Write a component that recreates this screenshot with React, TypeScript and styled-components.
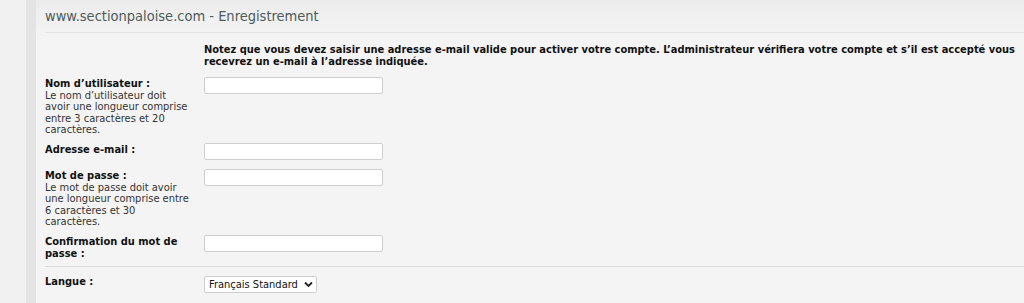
import React from "react";
import styled, { createGlobalStyle } from "styled-components";

const FONT = `"DejaVu Sans Condensed", "DejaVu Sans", Verdana, sans-serif`;

const GlobalStyle = createGlobalStyle`
  html, body { margin: 0; padding: 0; }
  body {
    background: #f1f1f1;
    font-family: ${FONT};
    color: #222;
  }
`;

const Page = styled.div`
  display: flex;
  min-height: 303px;
`;

const Gutter = styled.div`
  width: 26px;
  flex: none;
  background: #f1f1f1;
`;

const Rail = styled.div`
  width: 10px;
  flex: none;
  background: #e4e4e4;
`;

const Panel = styled.main`
  flex: 1;
  background: #f4f4f4;
  min-width: 0;
  overflow: hidden;
`;

const Header = styled.header`
  background: linear-gradient(#ececec, #f3f3f3);
  padding-left: 9px;
`;

const HeaderInner = styled.div`
  height: 32px;
  display: flex;
  align-items: center;
  border-bottom: 1px solid #e3e3e3;
`;

const Title = styled.h1`
  margin: 0;
  font-family: ${FONT};
  font-weight: normal;
  font-size: 14.5px;
  color: #4d5c5a;
`;

const Body = styled.form`
  padding: 0 0 0 9px;
`;

const Intro = styled.p`
  margin: 11px 0 5px 159px;
  font-size: 11px;
  line-height: 12px;
  font-weight: bold;
  color: #111;
  white-space: nowrap;
`;

const Fieldset = styled.fieldset<{ $divider?: boolean }>`
  margin: 0;
  padding: 0 0 ${(p) => (p.$divider ? "4px" : "0")};
  border: none;
  border-bottom: ${(p) => (p.$divider ? "1px solid #d9d9d9" : "none")};
`;

const Row = styled.div<{ $top?: number }>`
  display: grid;
  grid-template-columns: 159px 1fr;
  padding: ${(p) => p.$top ?? 4}px 0 3px;
`;

const LabelCell = styled.label<{ $flush?: boolean }>`
  display: block;
  padding-top: ${(p) => (p.$flush ? 0 : 1)}px;
  font-size: 11px;
  line-height: 11.6px;
  white-space: nowrap;
`;

const LabelText = styled.span`
  display: block;
  font-weight: bold;
  color: #111;
`;

const Explain = styled.span`
  display: block;
  color: #333;
`;

const Field = styled.div`
  padding-bottom: 2px;
`;

const TextInput = styled.input`
  display: block;
  box-sizing: border-box;
  width: 179px;
  height: 17px;
  margin: 0;
  padding: 1px 4px;
  border: 1px solid #cfcfcf;
  border-radius: 2px;
  background: #fff;
  font-size: 11px;
`;

const SelectWrap = styled.div`
  position: relative;
  width: 113px;
  height: 17px;
`;

const Select = styled.select`
  appearance: none;
  display: block;
  box-sizing: border-box;
  width: 113px;
  height: 17px;
  margin: 0;
  padding: 0 0 0 4px;
  border: 1px solid #cfcfcf;
  border-radius: 2px;
  background: #fff;
  font-family: ${FONT};
  font-size: 11px;
  line-height: 15px;
  color: #111;
`;

const Chevron = styled.svg`
  position: absolute;
  right: 4px;
  top: 5px;
  pointer-events: none;
`;

type FieldDef = { label: string[]; explain: string[]; type: string };

const fields: FieldDef[] = [
  {
    label: ["Nom d’utilisateur :"],
    explain: ["Le nom d’utilisateur doit", "avoir une longueur comprise", "entre 3 caractères et 20", "caractères."],
    type: "text",
  },
  { label: ["Adresse e-mail :"], explain: [], type: "email" },
  {
    label: ["Mot de passe :"],
    explain: ["Le mot de passe doit avoir", "une longueur comprise entre", "6 caractères et 30", "caractères."],
    type: "password",
  },
  { label: ["Confirmation du mot de", "passe :"], explain: [], type: "password" },
];

const Lines = ({ lines }: { lines: string[] }) => (
  <>
    {lines.map((l, j) => (
      <React.Fragment key={j}>
        {j > 0 && <br />}
        {l}
      </React.Fragment>
    ))}
  </>
);

export default function App() {
  return (
    <>
      <GlobalStyle />
      <Page>
        <Gutter />
        <Rail />
        <Panel>
          <Header>
            <HeaderInner>
              <Title>www.sectionpaloise.com - Enregistrement</Title>
            </HeaderInner>
          </Header>
          <Body>
            <Intro>
              Notez que vous devez saisir une adresse e-mail valide pour activer votre compte. L’administrateur vérifiera votre compte et s’il est accepté vous
              <br />
              recevrez un e-mail à l’adresse indiquée.
            </Intro>
            <Fieldset $divider>
              {fields.map((f, i) => (
                <Row key={i}>
                  <LabelCell>
                    <LabelText>
                      <Lines lines={f.label} />
                    </LabelText>
                    {f.explain.length > 0 && (
                      <Explain>
                        <Lines lines={f.explain} />
                      </Explain>
                    )}
                  </LabelCell>
                  <Field>
                    <TextInput type={f.type} />
                  </Field>
                </Row>
              ))}
            </Fieldset>
            <Row $top={9}>
              <LabelCell $flush>
                <LabelText>Langue :</LabelText>
              </LabelCell>
              <Field>
                <SelectWrap>
                  <Select defaultValue="fr">
                    <option value="fr">Français Standard</option>
                  </Select>
                  <Chevron width="9" height="7" viewBox="0 0 9 7">
                    <path d="M1 1.5 L4.5 5 L8 1.5" fill="none" stroke="#222" strokeWidth="1.8" />
                  </Chevron>
                </SelectWrap>
              </Field>
            </Row>
          </Body>
        </Panel>
      </Page>
    </>
  );
}
